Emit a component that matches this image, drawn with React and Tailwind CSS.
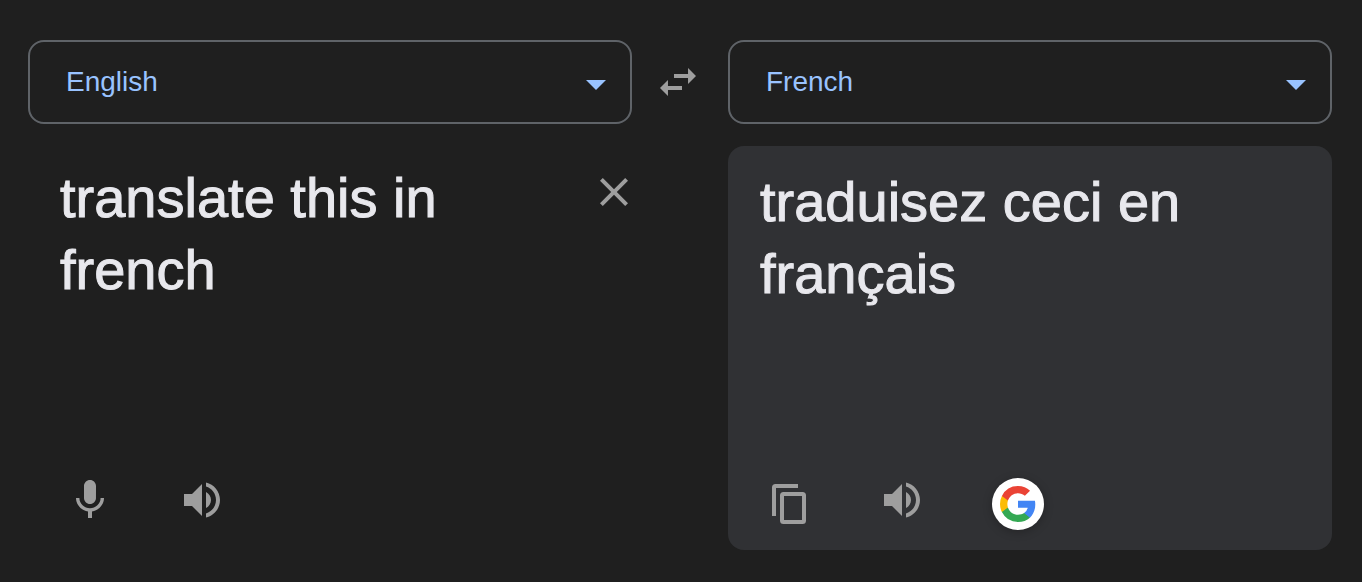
import { useState } from "react";

function Icon({ className = "size-12", viewBox = "0 0 24 24", children }) {
  return (
    <svg className={`block fill-current ${className}`} viewBox={viewBox} aria-hidden="true">
      {children}
    </svg>
  );
}

function LanguageSelect({ label, value, onChange }) {
  return (
    <div className="relative">
      <select
        aria-label={label}
        value={value}
        onChange={(e) => onChange(e.target.value)}
        className="block h-21 w-full appearance-none rounded-2xl border-2 border-[#5f6368] bg-transparent pr-16 pl-9 text-[28px] leading-10 text-[#99c3ff]"
      >
        <option>English</option>
        <option>French</option>
      </select>
      <Icon
        className="pointer-events-none absolute top-10 right-6.5 h-2.5 w-5 text-[#99c3ff]"
        viewBox="0 0 20 10"
      >
        <path d="M0 0h20L10 10z" />
      </Icon>
    </div>
  );
}

function IconButton({ label, children, className = "", ...rest }) {
  return (
    <button type="button" aria-label={label} className={`shrink-0 text-[#9e9e9e] ${className}`} {...rest}>
      {children}
    </button>
  );
}

function SpeakerIcon() {
  return (
    <Icon>
      <path d="M3 9v6h4l5 5V4L7 9H3zm13.5 3c0-1.77-1.02-3.29-2.5-4.03v8.05c1.48-.73 2.5-2.25 2.5-4.02zM14 3.23v2.06c2.89.86 5 3.54 5 6.71s-2.11 5.85-5 6.71v2.06c4.01-.91 7-4.49 7-8.77s-2.99-7.86-7-8.77z" />
    </Icon>
  );
}

function GoogleLogo() {
  return (
    <svg className="block size-9" viewBox="0 0 18 18" aria-hidden="true">
      <path fill="#4285f4" d="M17.64 9.2c0-.637-.057-1.251-.164-1.84H9v3.481h4.844a4.14 4.14 0 0 1-1.796 2.716v2.259h2.908c1.702-1.567 2.684-3.875 2.684-6.615z" />
      <path fill="#34a853" d="M9 18c2.43 0 4.467-.806 5.956-2.18l-2.908-2.259c-.806.54-1.837.86-3.048.86-2.344 0-4.328-1.584-5.036-3.711H.957v2.332A8.997 8.997 0 0 0 9 18z" />
      <path fill="#fbbc05" d="M3.964 10.71A5.41 5.41 0 0 1 3.682 9c0-.593.102-1.17.282-1.71V4.958H.957A8.996 8.996 0 0 0 0 9c0 1.452.348 2.827.957 4.042l3.007-2.332z" />
      <path fill="#ea4335" d="M9 3.58c1.321 0 2.508.454 3.44 1.345l2.582-2.58C13.463.891 11.426 0 9 0A8.997 8.997 0 0 0 .957 4.958L3.964 7.29C4.672 5.163 6.656 3.58 9 3.58z" />
    </svg>
  );
}

export default function App() {
  const [source, setSource] = useState("English");
  const [target, setTarget] = useState("French");
  const [text, setText] = useState("translate this in french");

  const swap = () => {
    setSource(target);
    setTarget(source);
  };

  return (
    <main className="grid min-h-screen grid-cols-[minmax(0,1fr)_96px_minmax(0,1fr)] grid-rows-[auto_1fr] gap-y-5.5 bg-[#1f1f1f] pt-10 pr-7.5 pb-8 pl-7 font-['Liberation_Sans',Arial,sans-serif] text-[#e8e8ed]">
      <LanguageSelect label="Source language" value={source} onChange={setSource} />
      <div className="flex items-center justify-center pr-1">
        <IconButton label="Swap languages" onClick={swap}>
          <Icon>
            <path d="M6.99 11L3 15l3.99 4v-3H14v-2H6.99v-3zM21 9l-3.99-4v3H10v2h7.01v3L21 9z" />
          </Icon>
        </IconButton>
      </div>
      <LanguageSelect label="Target language" value={target} onChange={setTarget} />

      <section className="flex flex-col justify-between pt-4 pb-4.5">
        <div className="flex items-start gap-3 pr-1 pl-8">
          <textarea
            id="source-text"
            aria-label="Text to translate"
            rows={3}
            value={text}
            onChange={(e) => setText(e.target.value)}
            spellCheck={false}
            className="block min-w-0 flex-1 resize-none bg-transparent text-[56px] leading-18 outline-none [-webkit-text-stroke:1px]"
          />
          <IconButton label="Clear text" className="pt-4" onClick={() => setText("")}>
            <Icon className="size-7" viewBox="5 5 14 14">
              <path d="M19 6.41L17.59 5 12 10.59 6.41 5 5 6.41 10.59 12 5 17.59 6.41 19 12 13.41 17.59 19 19 17.59 13.41 12z" />
            </Icon>
          </IconButton>
        </div>
        <div className="flex h-14 items-start gap-16 pl-9.5">
          <IconButton label="Translate by voice">
            <Icon viewBox="0 1 24 24">
              <path d="M12 15c1.66 0 2.99-1.34 2.99-3L15 6c0-1.66-1.34-3-3-3S9 4.34 9 6v6c0 1.66 1.34 3 3 3zm5.3-3c0 3-2.54 5.1-5.3 5.1S6.7 15 6.7 12H5c0 3.42 2.72 6.23 6 6.72V22h2v-3.28c3.28-.48 6-3.3 6-6.72h-1.7z" />
            </Icon>
          </IconButton>
          <IconButton label="Listen to source text">
            <SpeakerIcon />
          </IconButton>
        </div>
      </section>

      <section className="col-start-3 flex flex-col justify-between rounded-2xl bg-[#303134] pt-5 pb-4.5">
        <output htmlFor="source-text" className="block px-8 text-[56px] leading-18 [-webkit-text-stroke:1px]">
          traduisez ceci en français
        </output>
        <div className="flex h-14 items-start gap-16 pl-9.5">
          <IconButton label="Copy translation">
            <Icon viewBox="0 0 48 48">
              <path d="M32 8H9.500Q6 8 6 11.500V40h4V12h22zM17.500 16h19q3.500 0 3.500 3.500v25q0 3.500-3.500 3.500h-19q-3.500 0-3.500-3.500v-25q0-3.500 3.500-3.500zm.5 4v24h18V20z" fillRule="evenodd" />
            </Icon>
          </IconButton>
          <IconButton label="Listen to translation">
            <SpeakerIcon />
          </IconButton>
          <IconButton label="Open in Google Translate" className="p-0.5">
            <span className="flex size-13 items-center justify-center rounded-full bg-white shadow-[0_2px_10px_rgba(0,0,0,0.25)]">
              <GoogleLogo />
            </span>
          </IconButton>
        </div>
      </section>
    </main>
  );
}
